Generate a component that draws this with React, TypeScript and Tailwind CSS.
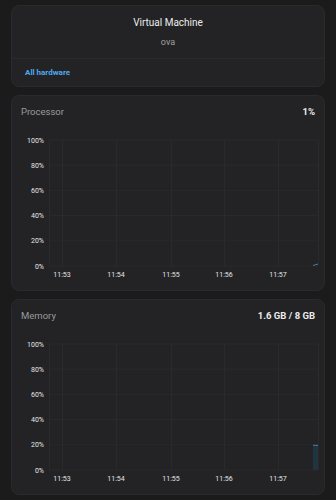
import React from "react";

const font = { fontFamily: "Roboto, 'Liberation Sans', sans-serif" };

const yTicks = [100, 80, 60, 40, 20, 0];
const xTicks = [
  { x: 50, label: "11:53" },
  { x: 104, label: "11:54" },
  { x: 159, label: "11:55" },
  { x: 212, label: "11:56" },
  { x: 266, label: "11:57" },
];

// chart area inside the card (card-relative coords)
const TOP = 12;
const BOTTOM = 138;
const LEFT = 37;
const RIGHT = 306;

function Chart({ value, kind }: { value: number; kind: "line" | "bar" }) {
  const yOf = (p: number) => BOTTOM - (p / 100) * (BOTTOM - TOP);
  return (
    <svg width={320} height={160} className="block" style={font}>
      {yTicks.map((t) => (
        <g key={t}>
          <line x1={LEFT} x2={RIGHT} y1={yOf(t)} y2={yOf(t)} stroke="#2a2a2c" strokeWidth={1} />
          <text x={32} y={yOf(t) + 2.5} fontSize={7} fill="#e6e6e6" textAnchor="end">
            {t}%
          </text>
        </g>
      ))}
      {[LEFT, ...xTicks.map((t) => t.x), RIGHT].map((x, i) => (
        <line key={i} x1={x + 0.5} x2={x + 0.5} y1={TOP} y2={BOTTOM} stroke="#2a2a2c" strokeWidth={1} />
      ))}
      {xTicks.map((t) => (
        <text key={t.label} x={t.x} y={149} fontSize={7} fill="#e6e6e6" textAnchor="middle">
          {t.label}
        </text>
      ))}
      {kind === "bar" ? (
        <g>
          <rect x={301} y={yOf(value)} width={5} height={BOTTOM - yOf(value)} fill="#1f3341" />
          <line x1={301} x2={306} y1={yOf(value) + 0.5} y2={yOf(value) + 0.5} stroke="#4a7ea6" strokeWidth={1} />
        </g>
      ) : (
        <line x1={301} x2={306} y1={BOTTOM - 0.5} y2={BOTTOM - 2} stroke="#4a7ea6" strokeWidth={1} />
      )}
    </svg>
  );
}

function StatCard({ title, stat, value, kind }: { title: string; stat: string; value: number; kind: "line" | "bar" }) {
  return (
    <div className="mx-[11px] rounded-lg border border-[#2a2a2c] bg-[#232325] h-[196px] overflow-hidden">
      <div className="flex items-center justify-between h-[32px] pl-[9px] pr-[9px]">
        <span className="text-[9.5px] text-[#9a9a9e]">{title}</span>
        <span className="text-[9.5px] font-bold text-[#ececec]">{stat}</span>
      </div>
      <Chart value={value} kind={kind} />
    </div>
  );
}

export default function App() {
  return (
    <div className="min-h-[500px] bg-[#1b1b1c] pt-[5px] pb-[5px] space-y-[8px]" style={font}>
      {/* Machine info */}
      <div className="mx-[11px] rounded-lg border border-[#2a2a2c] bg-[#232325] h-[82px] flex flex-col">
        <div className="h-[52px] flex flex-col items-center pt-[9px]">
          <span className="text-[10px] text-[#ececec]">Virtual Machine</span>
          <span className="text-[9px] text-[#a0a0a0] mt-[6px]">ova</span>
        </div>
        <div className="border-t border-[#2a2a2c] flex-1 flex items-center pl-[13px]">
          <span className="text-[8px] font-bold text-[#4fa9ef]">All hardware</span>
        </div>
      </div>

      <StatCard title="Processor" stat="1%" value={1} kind="line" />
      <StatCard title="Memory" stat="1.6 GB / 8 GB" value={20} kind="bar" />
    </div>
  );
}
